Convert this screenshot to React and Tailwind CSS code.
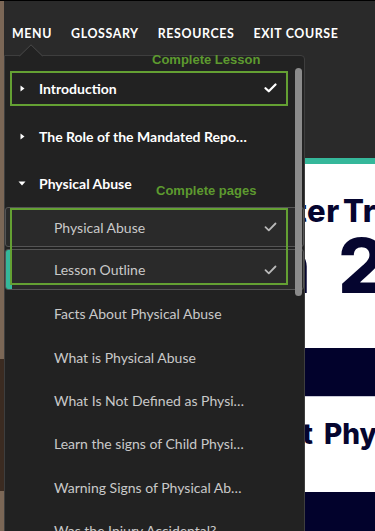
import React from "react";

const TOP = [
  { label: "Introduction", icon: "right", check: true },
  { label: "The Role of the Mandated Repo…", icon: "right" },
];

const SUBS = [
  "Facts About Physical Abuse",
  "What is Physical Abuse",
  "What Is Not Defined as Physi…",
  "Learn the signs of Child Physi…",
  "Warning Signs of Physical Ab…",
  "Was the Injury Accidental?",
];

function Check({ color = "#ffffff", width = 2.2 }) {
  return (
    <svg width="13" height="10" viewBox="0 0 13 10" className="shrink-0">
      <path d="M1.5 5.2 L4.8 8.3 L11.5 1.5" fill="none" stroke={color} strokeWidth={width} strokeLinecap="round" strokeLinejoin="round" />
    </svg>
  );
}

function TriRight() {
  return (
    <svg width="5" height="7" viewBox="0 0 5 7" className="shrink-0">
      <path d="M0.5 0.5 L4.5 3.5 L0.5 6.5 Z" fill="#ffffff" />
    </svg>
  );
}

function TriDown() {
  return (
    <svg width="8" height="5" viewBox="0 0 8 5" className="shrink-0">
      <path d="M0.5 0.5 L7.5 0.5 L4 4.5 Z" fill="#ffffff" />
    </svg>
  );
}

export default function App() {
  return (
    <div className="relative w-[375px] h-[531px] overflow-hidden flex flex-col bg-[#2a2a2a] font-['Lato',sans-serif]">
      <div className="h-[1px] bg-black shrink-0" />
      <div className="flex flex-1 min-h-0">
        {/* background photo strip */}
        <div className="w-[4px] shrink-0 flex flex-col bg-[#7b6756]">
          <div className="h-[358px]" />
          <div className="h-[132px] bg-[#3b2b21]" />
        </div>
        <div className="flex-1 flex flex-col min-w-0">
          {/* header */}
          <div className="h-[157px] shrink-0 bg-[#2a2a2a]">
            <nav className="flex gap-[19px] pl-[8px] pt-[25px] text-[12.4px] leading-[16px] font-bold tracking-[0.05em] text-white">
              <span>MENU</span>
              <span>GLOSSARY</span>
              <span>RESOURCES</span>
              <span>EXIT COURSE</span>
            </nav>
          </div>
          <div className="h-[6px] shrink-0 bg-[#35b79a]" />
          {/* course page */}
          <div className="flex-1 bg-white flex flex-col font-['Inter',sans-serif] font-extrabold text-[#05052f] whitespace-nowrap overflow-hidden">
            <div className="flex mt-[29px] text-[31px] leading-[36px] tracking-[0.02em]">
              <span className="w-[336px] shrink-0 text-right">Mandated Reporter</span>
              <span className="pl-[3px]">Training</span>
            </div>
            <div className="flex mt-[-2px] text-[76px] leading-[76px]">
              <span className="w-[307px] shrink-0 text-right">Lesson</span>
              <span className="pl-[27px]">2</span>
            </div>
            <div className="mt-[45px] h-[49px] shrink-0 bg-[#02022c] border-b border-[#c9c9d6]" />
            <div className="flex mt-[21px] text-[28px] leading-[32px]">
              <span className="w-[309px] shrink-0 text-right">About</span>
              <span className="pl-[11px]">Physical Abuse</span>
            </div>
            <div className="mt-[42px] flex-1 bg-[#02022c]" />
          </div>
        </div>
      </div>

      {/* dropdown menu panel */}
      <div className="absolute left-[4px] top-[55px] w-[301px] h-[500px] bg-[#222222] border border-[#3e3e3e] rounded-tr-[4px]">
        <div className="flex flex-col pt-[8px]">
          {TOP.map((t) => (
            <div key={t.label} className="h-[48px] flex items-center pl-[15px] pr-[27px]">
              <div className="w-[19px] flex"><TriRight /></div>
              <span className="flex-1 text-[14px] font-bold text-white whitespace-nowrap">{t.label}</span>
              {t.check && <Check />}
            </div>
          ))}
          <div className="h-[46px] flex items-center pl-[13px]">
            <div className="w-[21px] flex"><TriDown /></div>
            <span className="text-[14px] font-bold text-white">Physical Abuse</span>
          </div>

          <div className="h-[42px] py-[1px]">
            <div className="h-full flex items-center pl-[48px] pr-[26px] bg-[#2a2a2a] border border-[#555555] rounded-[3px]">
              <span className="flex-1 text-[14px] text-[#c9c9c9]">Physical Abuse</span>
              <Check color="#b9b9b9" width={1.8} />
            </div>
          </div>
          <div className="h-[44px] pt-[1px] pb-[2px]">
            <div className="h-full flex items-center bg-[#2a2a2a] border border-[#555555] rounded-[3px] overflow-hidden pr-[26px]">
              <div className="w-[6px] self-stretch bg-[#35b79a]" />
              <span className="flex-1 pl-[42px] text-[14px] text-[#c9c9c9]">Lesson Outline</span>
              <Check color="#b9b9b9" width={1.8} />
            </div>
          </div>
          {SUBS.map((s) => (
            <div key={s} className="h-[43.4px] shrink-0 flex items-center pl-[49px]">
              <span className="text-[14px] text-[#c9c9c9] whitespace-nowrap">{s}</span>
            </div>
          ))}
        </div>

        {/* scrollbar thumb */}
        <div className="absolute left-[290px] top-[12px] w-[7px] h-[228px] rounded-full bg-[#8b8b8b]" />

        {/* annotation boxes */}
        <div className="absolute left-[5px] top-[15px] w-[278px] h-[35px] border-2 border-[#64a033]" />
        <div className="absolute left-[5px] top-[152px] w-[278px] h-[77px] border-2 border-[#64a033]" />
        <span className="absolute left-[147px] top-[-3px] text-[13px] leading-[14px] font-bold text-[#5d9a2f] font-['Liberation_Sans',sans-serif]">Complete Lesson</span>
        <span className="absolute left-[151px] top-[128px] text-[13px] leading-[14px] font-bold text-[#5d9a2f] font-['Liberation_Sans',sans-serif]">Complete pages</span>
      </div>

      {/* caret under MENU */}
      <svg className="absolute left-[19px] top-[44px]" width="24" height="13" viewBox="0 0 24 13">
        <path d="M0.5 12 L12 0.8 L23.5 12" fill="#222222" stroke="#4a4a4a" strokeWidth="1" />
      </svg>
    </div>
  );
}
